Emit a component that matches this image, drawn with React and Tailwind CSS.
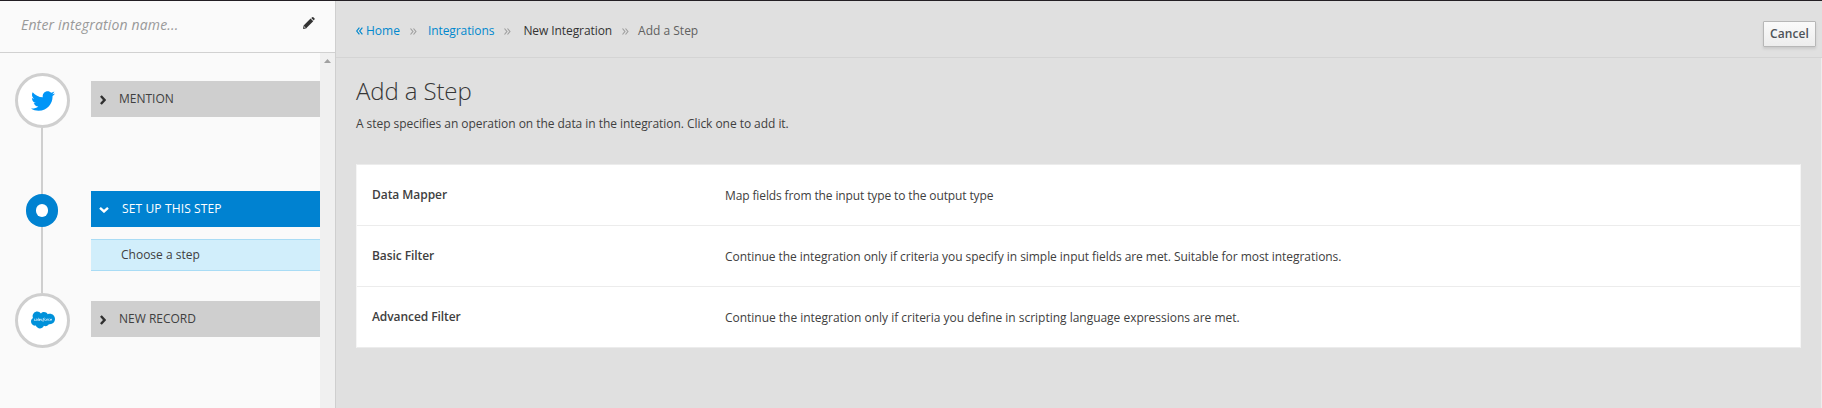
import React from "react";
import { FaTwitter, FaSalesforce } from "react-icons/fa";

const operations = [
  {
    name: "Data Mapper",
    text: "Map fields from the input type to the output type",
    nameClass: "tracking-[-0.05px]",
    textClass: "tracking-[-0.12px]",
  },
  {
    name: "Basic Filter",
    text: "Continue the integration only if criteria you specify in simple input fields are met. Suitable for most integrations.",
    nameClass: "tracking-[-0.08px]",
    textClass: "tracking-[-0.055px]",
  },
  {
    name: "Advanced Filter",
    text: "Continue the integration only if criteria you define in scripting language expressions are met.",
    nameClass: "tracking-[-0.08px]",
    textClass: "tracking-[-0.02px]",
  },
];

function ChevronRight() {
  return (
    <svg width="6" height="10" viewBox="0 0 6 10" className="mt-0.5 shrink-0" fill="none" stroke="#303030" strokeWidth="2.4">
      <path d="M0.9 1 4.5 5 0.9 9" />
    </svg>
  );
}

function ChevronDown() {
  return (
    <svg width="10" height="6" viewBox="0 0 10 6" className="mt-0.5 shrink-0" fill="none" stroke="#ffffff" strokeWidth="2.4">
      <path d="M1 0.9 5 4.5 9 0.9" />
    </svg>
  );
}

function Separator({ className }) {
  return (
    <svg width="7" height="7" viewBox="0 0 7 7" className={className} fill="none" stroke="#a0a0a0" strokeWidth="1.2">
      <path d="M0.5 0.5 2.9 3.5 0.5 6.5M3.5 0.5 5.9 3.5 3.5 6.5" />
    </svg>
  );
}

function Pencil() {
  return (
    <svg width="12" height="12" viewBox="0 0 13 13" fill="#333333">
      <path d="M8.9 1.1 10 .3Q10.7-.2 11.5.5L12.3 1.3Q13 2 12.4 2.8L11.7 3.8ZM8.2 1.7 11.1 4.6 4.3 11.4 3.7 12.3.7 13Q0 13 .1 12.3L.7 9.2 1.5 8.4ZM1.6 10.1 1.2 11.7 2.9 11.3Z" fillRule="evenodd" />
    </svg>
  );
}

function Connection({ children }) {
  return (
    <div className="flex h-[55px] w-[55px] shrink-0 items-center justify-center rounded-full border-[3px] border-[#cfcfcf] bg-white">
      {children}
    </div>
  );
}

function Sidebar() {
  return (
    <aside className="flex w-[336px] shrink-0 flex-col border-r border-[#cfcfcf] bg-[#fafafa]">
      <div className="flex h-[52px] shrink-0 items-start justify-between border-b border-[#d1d1d1] pl-[21px] pr-5">
        <span className="pt-3.5 text-[14px] leading-5 tracking-[0.16px] italic text-[#999999]">Enter integration name...</span>
        <span className="pt-4">
          <Pencil />
        </span>
      </div>
      <div className="flex flex-1">
        <div className="flex w-[91px] flex-col pl-[15px] pt-5">
          <Connection>
            <FaTwitter size={24} color="#0095f7" />
          </Connection>
          <div className="ml-[26px] h-[66px] w-[2px] bg-[#cfcfcf]" />
          <div className="ml-[11px] flex h-[33px] w-8 items-center justify-center rounded-[16px] bg-[#0082d1]">
            <div className="h-[13px] w-3 rounded-full bg-white" />
          </div>
          <div className="ml-[26px] h-[66px] w-[2px] bg-[#cfcfcf]" />
          <Connection>
            <FaSalesforce size={24} color="#0091da" className="mb-0.5" />
          </Connection>
        </div>
        <div className="flex w-[229px] flex-col pt-7 text-[12px] leading-5 text-[#404040]">
          <div className="flex h-9 items-center bg-[#cfcfcf] pl-[9px]">
            <ChevronRight />
            <span className="ml-[13px]">MENTION</span>
          </div>
          <div className="mt-[74px] flex h-9 items-center bg-[#0082d1] pl-2 text-white">
            <ChevronDown />
            <span className="ml-[13px] tracking-[0.13px]">SET UP THIS STEP</span>
          </div>
          <div className="mt-3 flex h-8 items-center border-y border-[#a9dcf5] bg-[#d1eefb] pl-[30px]">
            Choose a step
          </div>
          <div className="mt-[30px] flex h-9 items-center bg-[#cfcfcf] pl-[9px]">
            <ChevronRight />
            <span className="ml-[13px]">NEW RECORD</span>
          </div>
        </div>
        <div className="flex w-[15px] justify-center bg-[#f0f0f0] pt-1.5">
          <svg width="7" height="4" viewBox="0 0 7 4" fill="#a0a0a0">
            <path d="M0 4 3.5 0 7 4Z" />
          </svg>
        </div>
      </div>
    </aside>
  );
}

export default function App() {
  return (
    <div className="flex h-[408px] w-[1822px] overflow-hidden border-t border-[#231f24] bg-[#e0e0e0] font-['Open_Sans',sans-serif] text-[12px] leading-5 text-[#404040]">
      <Sidebar />
      <main className="flex min-w-0 flex-1 flex-col">
        <header className="flex h-[57px] shrink-0 items-start justify-between border-b border-[#d4d4d4] pl-5 pr-1.5">
          <nav className="flex items-center pt-5">
            <svg width="7" height="8" viewBox="0 0 7 8" fill="none" stroke="#0088ce" strokeWidth="1.2">
              <path d="M3.4 0.6 0.7 4 3.4 7.4M6.4 0.6 3.7 4 6.4 7.4" />
            </svg>
            <a className="ml-[3px] text-[#0088ce]">Home</a>
            <Separator className="mt-px ml-[10px]" />
            <a className="ml-[11px] tracking-[-0.08px] text-[#0088ce]">Integrations</a>
            <Separator className="mt-px ml-[10px]" />
            <span className="ml-3 tracking-[-0.08px] text-[#333333]">New Integration</span>
            <Separator className="mt-px ml-[10px]" />
            <span className="ml-[9px] text-[#606060]">Add a Step</span>
          </nav>
          <button className="mt-5 flex h-[26px] w-[53px] items-center justify-center rounded-[1px] border border-[#b7b7b7] bg-linear-to-b from-[#fafafa] to-[#ededed] font-semibold tracking-[0.1px] text-[#4d5258] shadow-[0_2px_3px_rgba(3,3,3,0.1)]">
            Cancel
          </button>
        </header>
        <section className="flex-1 border-r border-[#ededed] pl-5 pr-5">
          <h1 className="pt-5 text-[24px] leading-[26px] font-light tracking-[-0.12px] text-[#363636]">Add a Step</h1>
          <p className="pt-2.5 tracking-[-0.05px]">A step specifies an operation on the data in the integration. Click one to add it.</p>
          <div className="mt-[30px] divide-y divide-[#ececec] border border-x-[#f5f5f5] border-y-[#ececec] bg-white">
            {operations.map((op) => (
              <div key={op.name} className="flex h-[61px] items-start px-[15px] pt-5 last:h-[60px]">
                <span className={`w-[353px] font-semibold ${op.nameClass}`}>{op.name}</span>
                <span className={`pt-px ${op.textClass}`}>{op.text}</span>
              </div>
            ))}
          </div>
        </section>
      </main>
    </div>
  );
}
